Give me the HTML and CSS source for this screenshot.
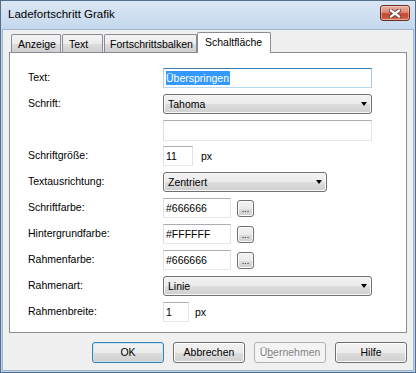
FILE: index.html
```html
<!DOCTYPE html>
<html lang="de">
<head>
    <meta charset="UTF-8">
    <title>Ladefortschritt Grafik</title>
    <link rel="stylesheet" href="styles.css">
</head>
<body>
    <div class="window">
        <div class="titlebar">
            <span class="title">Ladefortschritt Grafik</span>
            <div class="close-btn">
                <svg width="12" height="9" viewBox="0 0 12 9">
                    <path d="M2 1.5 L10 7.5 M10 1.5 L2 7.5" stroke="#5b3a33" stroke-width="4" stroke-linecap="square" fill="none"/>
                    <path d="M2 1.5 L10 7.5 M10 1.5 L2 7.5" stroke="#ffffff" stroke-width="2.2" stroke-linecap="square" fill="none"/>
                </svg>
            </div>
        </div>

        <div class="client">
            <div class="tabs">
                <div class="tab tab-anzeige">Anzeige</div>
                <div class="tab tab-text">Text</div>
                <div class="tab tab-balken">Fortschrittsbalken</div>
                <div class="tab tab-active">Schaltfläche</div>
            </div>

            <div class="panel">
                <div class="form">
                    <div class="label">Text:</div>
                    <div class="textbox focused w-full"><span class="sel">Überspringen</span></div>

                    <div class="label">Schrift:</div>
                    <div class="combo w-full"><span>Tahoma</span><span class="arrow"></span></div>

                    <div class="label"></div>
                    <div class="textbox w-full tall"></div>

                    <div class="label">Schriftgröße:</div>
                    <div class="unit-row"><div class="textbox w-num">11</div><span>px</span></div>

                    <div class="label">Textausrichtung:</div>
                    <div class="combo w-mid"><span>Zentriert</span><span class="arrow"></span></div>

                    <div class="label">Schriftfarbe:</div>
                    <div class="color-row"><div class="textbox w-color">#666666</div><div class="dots-btn">...</div></div>

                    <div class="label">Hintergrundfarbe:</div>
                    <div class="color-row"><div class="textbox w-color">#FFFFFF</div><div class="dots-btn">...</div></div>

                    <div class="label">Rahmenfarbe:</div>
                    <div class="color-row"><div class="textbox w-color">#666666</div><div class="dots-btn">...</div></div>

                    <div class="label">Rahmenart:</div>
                    <div class="combo w-full"><span>Linie</span><span class="arrow"></span></div>

                    <div class="label">Rahmenbreite:</div>
                    <div class="unit-row unit-row-sm"><div class="textbox w-num-sm">1</div><span>px</span></div>
                </div>
            </div>

            <div class="buttons">
                <div class="btn btn-default">OK</div>
                <div class="btn">Abbrechen</div>
                <div class="btn btn-disabled">Ü<u>b</u>ernehmen</div>
                <div class="btn">Hilfe</div>
            </div>
        </div>
    </div>
</body>
</html>
```

FILE: styles.css
```css
* {
    box-sizing: border-box;
}

body {
    margin: 0;
    font-family: "Liberation Sans", Arial, sans-serif;
    font-size: 10.5px;
    color: #000;
}

.window {
    width: 416px;
    height: 373px;
    border: 1px solid #566f89;
    padding: 0 2px 2px;
    background: linear-gradient(#dae6f4, #c3d7ed 30px, #bcd2ea);
    display: flex;
    flex-direction: column;
}

.titlebar {
    height: 29px;
    display: flex;
    justify-content: space-between;
    align-items: flex-start;
    padding: 0 3px 0 5px;
}

.title {
    font-size: 11.5px;
    line-height: 13px;
    margin-top: 7px;
}

.close-btn {
    width: 30px;
    height: 16px;
    margin-top: 4px;
    border: 1px solid #6d2d22;
    border-radius: 3px;
    background: linear-gradient(#eab0a3 0%, #dc8a76 45%, #c64a31 55%, #c9573c 85%, #d98a6f 100%);
    box-shadow: inset 0 0 0 1px rgba(255,255,255,0.35);
    display: flex;
    align-items: center;
    justify-content: center;
}

.client {
    height: 340px;
    background: #f0f0f0;
    padding: 2px 6px 0 6px;
    box-shadow: 0 0 0 1px #9fb6cf;
}

/* Reiter */
.tabs {
    height: 20px;
    display: flex;
    align-items: flex-end;
    padding-left: 2px;
}

.tab {
    height: 18px;
    border: 1px solid #898c95;
    border-bottom: none;
    border-radius: 2px 2px 0 0;
    background: linear-gradient(#f3f3f3, #ebebeb 50%, #dddddd 51%, #cfcfcf);
    padding: 3px 0 0 6px;
    line-height: 13px;
    white-space: nowrap;
}

.tab-anzeige { width: 50px; }
.tab-text { width: 41px; margin-left: 1px; }
.tab-balken { width: 93px; margin-left: 1px; padding-left: 5px; }

.tab-active {
    width: 74px;
    height: 21px;
    margin-bottom: -1px;
    background: #fff;
    position: relative;
    z-index: 1;
    padding: 3px 0 0 7px;
}

.panel {
    height: 281px;
    border: 1px solid #898c95;
    background: #fff;
    padding: 15px 0 0 18px;
}

.form {
    display: grid;
    grid-template-columns: 135px auto;
    grid-auto-rows: 20px;
    row-gap: 6px;
    align-items: start;
}

.label {
    padding-top: 3px;
    line-height: 13px;
    white-space: nowrap;
}

/* Eingabefelder */
.textbox {
    height: 20px;
    border: 1px solid;
    border-color: #abadb3 #e2e3ea #e3e9ef #dbdfe6;
    background: #fff;
    padding: 0 2px;
    line-height: 18px;
    white-space: nowrap;
}

.textbox.focused {
    border-color: #3d7bad #a4c9e3 #b7d9ed #b5cfe7;
}

.textbox.tall {
    height: 21px;
}

.sel {
    display: inline-block;
    background: #3399ff;
    color: #fff;
    line-height: 14px;
    padding-right: 1px;
}

.w-full { width: 209px; }
.w-mid { width: 164px; }
.w-color { width: 68px; }
.w-num { width: 30px; }
.w-num-sm { width: 26px; }

.combo {
    height: 20px;
    border: 1px solid #707070;
    border-radius: 3px;
    background: linear-gradient(#f2f2f2, #ebebeb 50%, #dddddd 51%, #cfcfcf);
    box-shadow: inset 0 0 0 1px #f8f8f8;
    display: flex;
    align-items: center;
    justify-content: space-between;
    padding: 0 4px 0 4px;
}

.arrow {
    width: 0;
    height: 0;
    border-left: 3.5px solid transparent;
    border-right: 3.5px solid transparent;
    border-top: 4px solid #000;
}

.unit-row {
    display: flex;
    align-items: center;
    gap: 8px;
}

.unit-row-sm {
    gap: 6px;
}

.color-row {
    display: flex;
    align-items: center;
    gap: 6px;
}

.dots-btn {
    width: 17px;
    height: 17px;
    border: 1px solid #707070;
    border-radius: 3px;
    background: linear-gradient(#f2f2f2, #ebebeb 50%, #dddddd 51%, #cfcfcf);
    box-shadow: inset 0 0 0 1px #fafafa;
    font-size: 9px;
    line-height: 17px;
    text-align: center;
}

/* Schaltflächen unten */
.buttons {
    display: flex;
    justify-content: flex-end;
    gap: 9px;
    margin-top: 9px;
}

.btn {
    width: 72px;
    height: 21px;
    border: 1px solid #707070;
    border-radius: 3px;
    background: linear-gradient(#f2f2f2, #ebebeb 50%, #dddddd 51%, #cfcfcf);
    box-shadow: inset 0 0 0 1px #fcfcfc;
    text-align: center;
    line-height: 19px;
}

.btn-default {
    border-color: #3c7fb1;
    box-shadow: inset 0 0 0 1px #c4e5f6;
}

.btn-disabled {
    border-color: #adb2b5;
    background: #f4f4f4;
    box-shadow: none;
    color: #838383;
}
```
